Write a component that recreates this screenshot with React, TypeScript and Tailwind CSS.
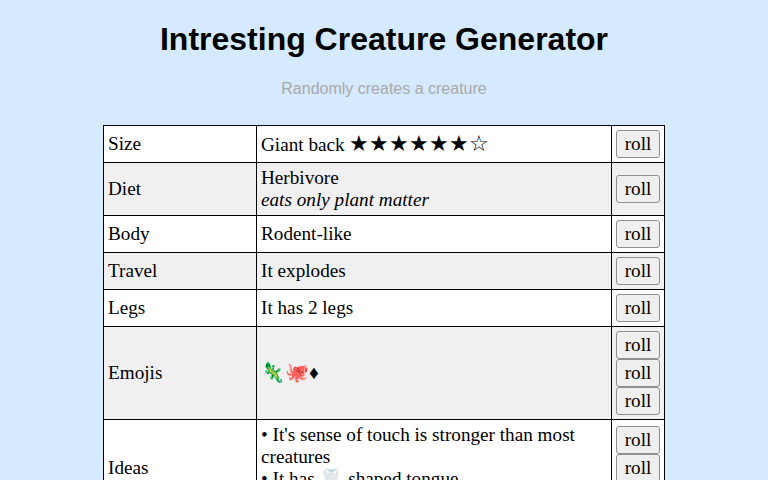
import React from "react";

const rows: { label: string; value: React.ReactNode; rolls: number; alt?: boolean }[] = [
  {
    label: "Size",
    value: (
      <>
        Giant back <span className="text-[21.5px]">★★★★★★☆</span>
      </>
    ),
    rolls: 1,
  },
  {
    label: "Diet",
    value: (
      <>
        Herbivore
        <br />
        <i>eats only plant matter</i>
      </>
    ),
    rolls: 1,
    alt: true,
  },
  { label: "Body", value: "Rodent-like", rolls: 1 },
  { label: "Travel", value: "It explodes", rolls: 1, alt: true },
  { label: "Legs", value: "It has 2 legs", rolls: 1 },
  { label: "Emojis", value: "🦎🐙♦", rolls: 3, alt: true },
  {
    label: "Ideas",
    value: (
      <>
        • It's sense of touch is stronger than most creatures
        <br />• It has 🦷 shaped tongue
        <br />• It sleeps upside down
      </>
    ),
    rolls: 3,
  },
];

function RollButton() {
  return (
    <button
      type="button"
      className="block rounded-[3px] border border-[#8f8f8f] bg-[#efefef] px-[7px] py-px leading-[24px] hover:bg-[#e5e5e5]"
    >
      roll
    </button>
  );
}

export default function App() {
  return (
    <div className="min-h-[480px] bg-[#d6eaff] pb-10 font-['Liberation_Serif',serif]">
      <h1 className="pt-[21px] text-center font-['Liberation_Sans',sans-serif] text-[32px] font-bold leading-[37px] text-black">
        Intresting Creature Generator
      </h1>
      <p className="mt-[22px] text-center font-['Liberation_Sans',sans-serif] text-base leading-[18px] text-[#a8a8a8]">
        Randomly creates a creature
      </p>
      <table className="mx-auto mt-[27px] w-[562px] border-collapse bg-white text-[19.2px] leading-[22px] text-black">
        <tbody>
          {rows.map((row) => (
            <tr key={row.label} className={row.alt ? "bg-[#f0f0f0]" : "bg-white"}>
              <td className="w-[153px] border border-black px-[4px] py-[4px] align-middle">
                {row.label}
              </td>
              <td className="border border-black px-[4px] py-[4px] align-middle">{row.value}</td>
              <td className="w-[53px] border border-black px-[4px] py-[4px] align-middle">
                <div className="flex flex-col">
                  {Array.from({ length: row.rolls }).map((_, i) => (
                    <RollButton key={i} />
                  ))}
                </div>
              </td>
            </tr>
          ))}
        </tbody>
      </table>
    </div>
  );
}
